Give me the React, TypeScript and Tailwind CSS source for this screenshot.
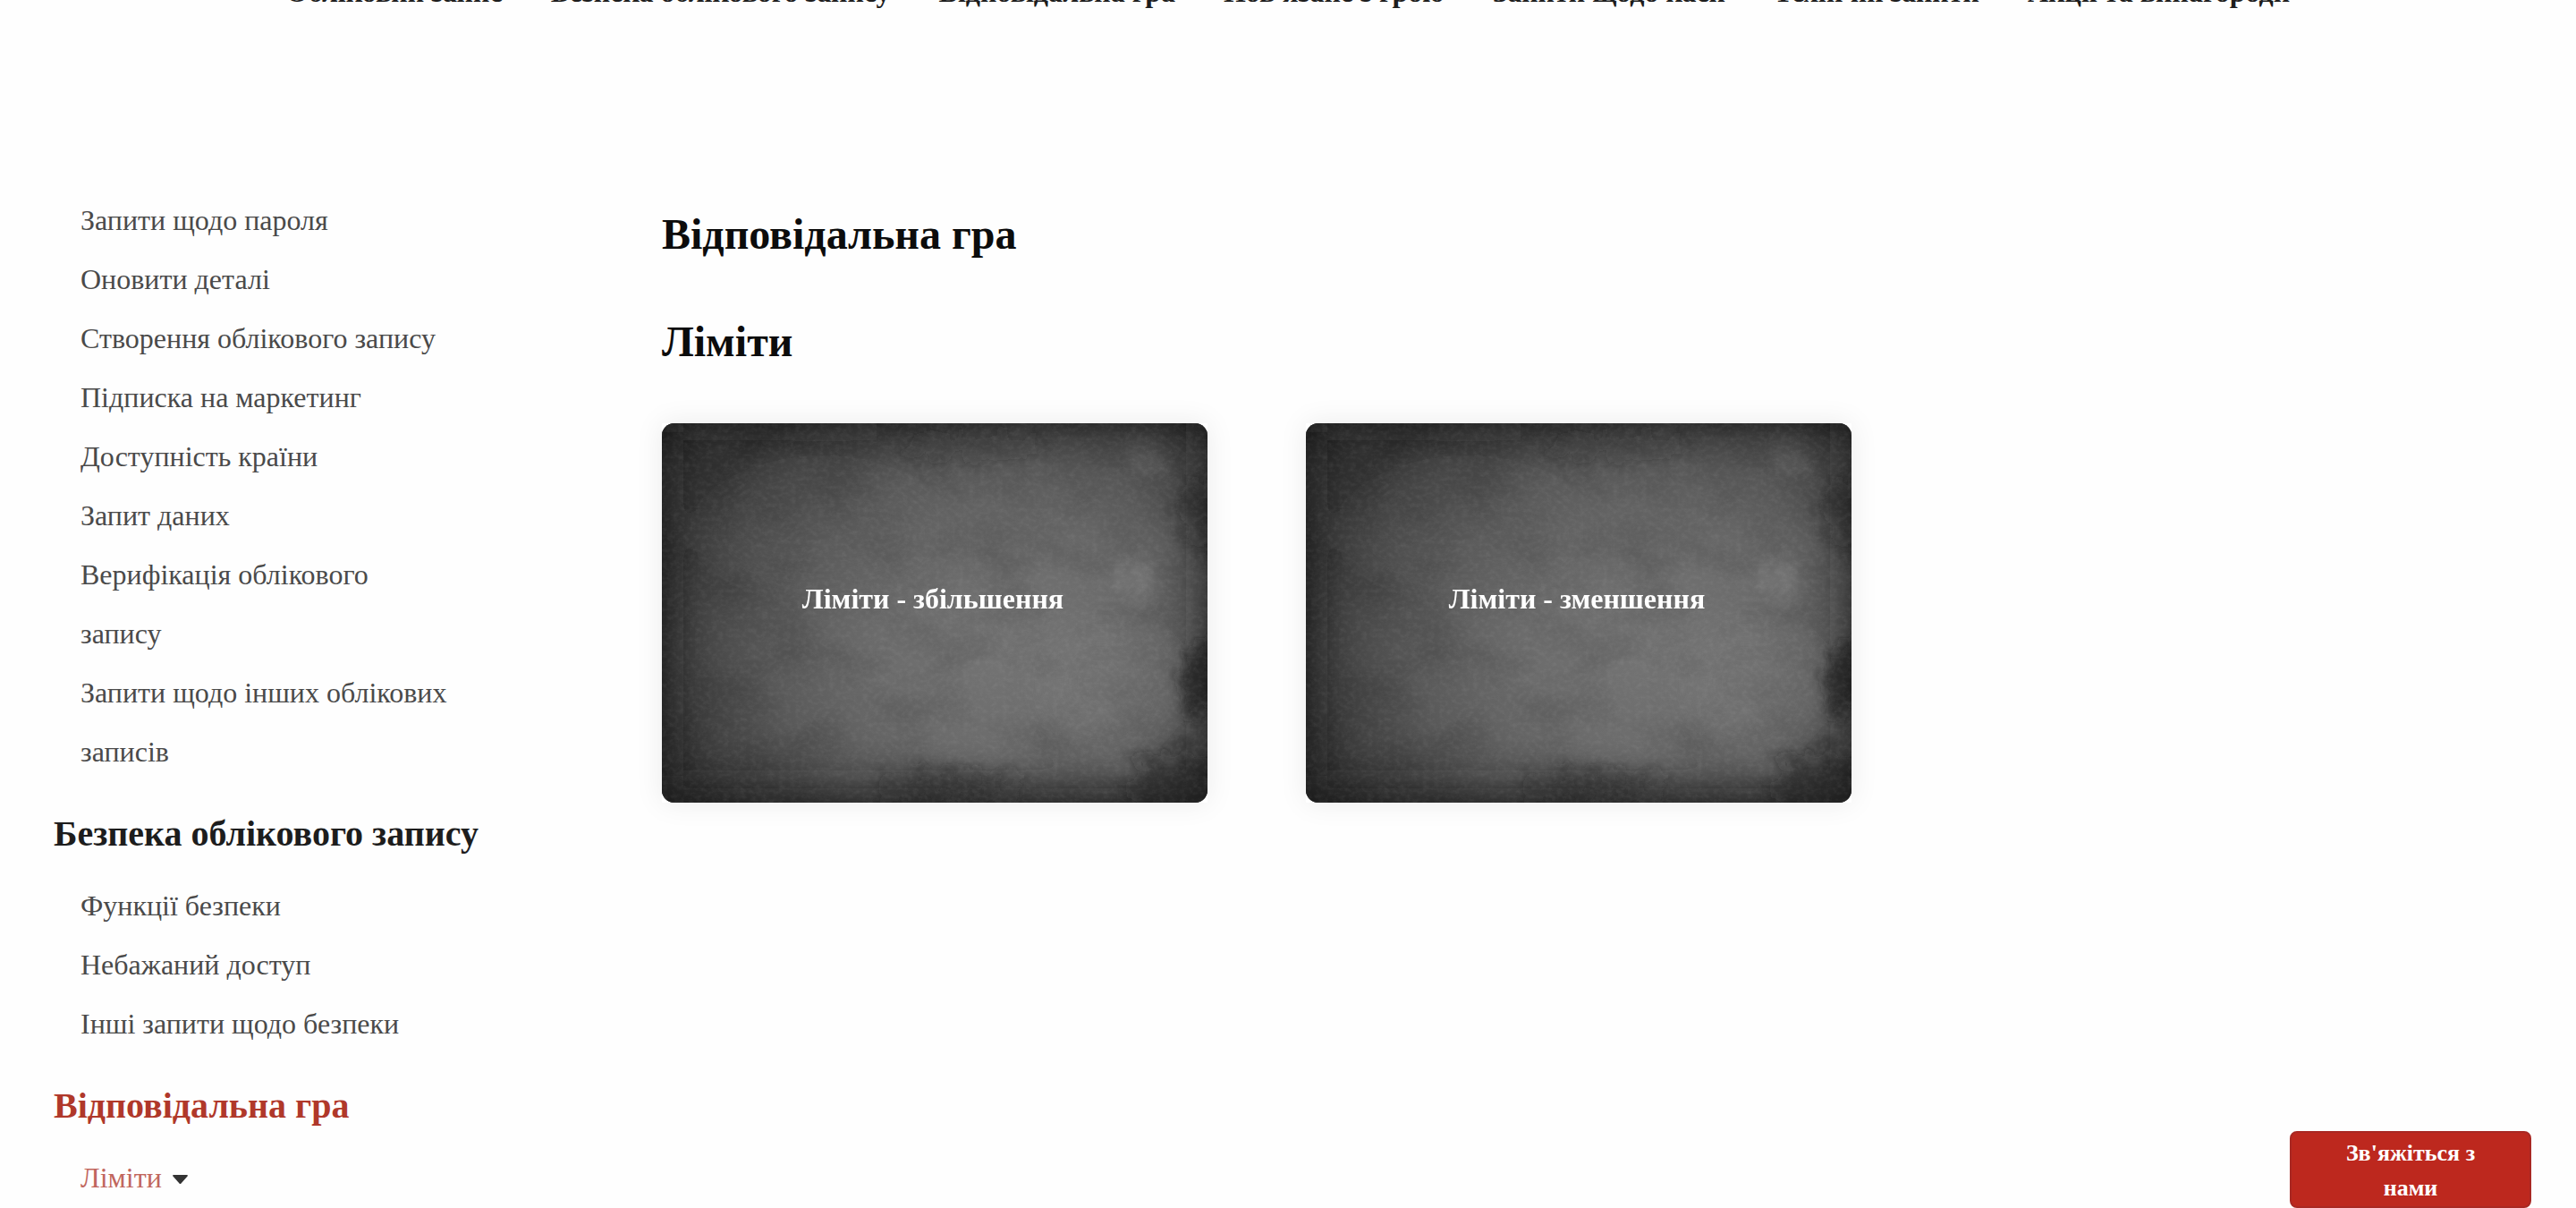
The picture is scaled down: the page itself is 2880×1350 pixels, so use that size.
import React from "react";

const topLinks = [
  "Обліковий запис",
  "Безпека облікового запису",
  "Відповідальна гра",
  "Пов'язане з грою",
  "Запити щодо каси",
  "Технічні запити",
  "Акції та винагороди",
];

const accountLinks = [
  "Запити щодо пароля",
  "Оновити деталі",
  "Створення облікового запису",
  "Підписка на маркетинг",
  "Доступність країни",
  "Запит даних",
  "Верифікація облікового запису",
  "Запити щодо інших облікових записів",
];

const securityLinks = ["Функції безпеки", "Небажаний доступ", "Інші запити щодо безпеки"];

const cards = ["Ліміти - збільшення", "Ліміти - зменшення"];

function Slate({ id }: { id: string }) {
  return (
    <svg
      className="absolute inset-0 h-full w-full"
      viewBox="0 0 610 424"
      preserveAspectRatio="none"
      aria-hidden="true"
    >
      <defs>
        <radialGradient id={`${id}-glow`} gradientUnits="userSpaceOnUse" cx="0" cy="0" r="1" gradientTransform="translate(385 250) scale(400 320)">
          <stop offset="0" stopColor="#747474" />
          <stop offset="0.35" stopColor="#6c6c6c" />
          <stop offset="0.65" stopColor="#5a5a5a" />
          <stop offset="1" stopColor="#363636" />
        </radialGradient>
        <filter id={`${id}-soft`} filterUnits="userSpaceOnUse" x="-120" y="-120" width="850" height="664">
          <feGaussianBlur stdDeviation="22" />
        </filter>
        <filter id={`${id}-edge`} filterUnits="userSpaceOnUse" x="-60" y="-60" width="730" height="544">
          <feGaussianBlur stdDeviation="10" result="blurred" />
          <feTurbulence type="fractalNoise" baseFrequency="0.05" numOctaves="5" seed="7" result="noise" />
          <feDisplacementMap in="blurred" in2="noise" scale="45" xChannelSelector="R" yChannelSelector="G" />
          <feGaussianBlur stdDeviation="2" />
        </filter>
        <filter id={`${id}-cloud`} x="0" y="0" width="100%" height="100%" colorInterpolationFilters="sRGB">
          <feTurbulence type="fractalNoise" baseFrequency="0.012 0.018" numOctaves="6" seed="12" />
          <feColorMatrix values="0 0 0 0 0  0 0 0 0 0  0 0 0 0 0  1 0 0 0 -0.38" />
        </filter>
        <filter id={`${id}-grain`} x="0" y="0" width="100%" height="100%" colorInterpolationFilters="sRGB">
          <feTurbulence type="fractalNoise" baseFrequency="0.16 0.2" numOctaves="3" seed="31" />
          <feColorMatrix values="0 0 0 0 1  0 0 0 0 1  0 0 0 0 1  0.5 0 0 0 -0.2" />
        </filter>
      </defs>
      <rect width="610" height="424" fill={`url(#${id}-glow)`} />
      <g filter={`url(#${id}-soft)`}>
        <ellipse cx="490" cy="290" rx="60" ry="60" fill="#858585" opacity="0.35" />
        <ellipse cx="180" cy="120" rx="120" ry="50" fill="#5e5e5e" opacity="0.3" />
        <rect x="-100" y="-100" width="110" height="624" fill="#1c1c1c" opacity="0.75" />
        <rect x="-100" y="-100" width="810" height="98" fill="#141414" opacity="0.75" />
        <rect x="-100" y="-100" width="340" height="110" fill="#1c1c1c" opacity="0.45" />
        <rect x="600" y="-100" width="110" height="624" fill="#1c1c1c" opacity="0.7" />
        <rect x="-100" y="408" width="810" height="110" fill="#1c1c1c" opacity="0.85" />
      </g>
      <g filter={`url(#${id}-edge)`}>
        <ellipse cx="612" cy="288" rx="30" ry="46" fill="#1d1d1d" opacity="0.7" />
        <ellipse cx="612" cy="100" rx="36" ry="40" fill="#222" opacity="0.35" />
        <ellipse cx="325" cy="408" rx="80" ry="16" fill="#222" opacity="0.45" />
        <ellipse cx="580" cy="410" rx="60" ry="44" fill="#1d1d1d" opacity="0.45" />
        <ellipse cx="345" cy="28" rx="85" ry="15" fill="#222" opacity="0.3" />
        <ellipse cx="540" cy="38" rx="20" ry="14" fill="#888" opacity="0.3" />
        <ellipse cx="532" cy="175" rx="14" ry="30" fill="#a0a0a0" opacity="0.3" />
      </g>
      <rect width="610" height="424" filter={`url(#${id}-cloud)`} opacity="0.24" />
      <rect width="610" height="424" filter={`url(#${id}-grain)`} opacity="0.25" />
    </svg>
  );
}

function SideHeading({ active, children }: { active?: boolean; children: React.ReactNode }) {
  return (
    <h3 className={`pt-[26px] pb-[14px] text-[40px] leading-[66px] font-bold whitespace-nowrap ${active ? "text-[#b0382a]" : "text-[#1d1d1d]"}`}>
      <a href="#section">{children}</a>
    </h3>
  );
}

function SideList({ items }: { items: string[] }) {
  return (
    <ul className="pr-8 pl-[30px] text-[32px] leading-[66px] text-[#4a4a4a]">
      {items.map((item) => (
        <li key={item}>
          <a href="#topic">{item}</a>
        </li>
      ))}
    </ul>
  );
}

export default function App() {
  return (
    <div className="min-h-screen bg-[#fefefe] font-['Liberation_Serif',serif]">
      <header className="flex h-[9px] items-end justify-center overflow-hidden">
        <nav className="flex gap-[54px] text-[32px] leading-[36px] font-bold whitespace-nowrap text-[#1d1d1d]">
          {topLinks.map((label) => (
            <a key={label} href="#category">
              {label}
            </a>
          ))}
        </nav>
      </header>

      <div className="flex pt-[204px] pr-[90px] pl-[60px]">
        <aside className="w-[480px] shrink-0">
          <SideList items={accountLinks} />
          <SideHeading>Безпека облікового запису</SideHeading>
          <SideList items={securityLinks} />
          <SideHeading active>Відповідальна гра</SideHeading>
          <div className="flex items-center gap-3 pl-[30px] text-[32px] leading-[66px] text-[#c1665d]">
            <a href="#limits">Ліміти</a>
            <button type="button" aria-label="Розгорнути" className="pt-1">
              <svg width="17" height="10" viewBox="0 0 17 10" aria-hidden="true">
                <path d="M1 0h15c.9 0 1.200.9.6 1.500L9.500 9.400c-.6.700-1.400.7-2 0L.4 1.500C-.2.9.1 0 1 0z" fill="#333" />
              </svg>
            </button>
          </div>
        </aside>

        <main className="ml-[200px] min-w-0 flex-1 pt-[21px] text-[#0c0c0c]">
          <h1 className="text-[48px] leading-[56px] font-bold">Відповідальна гра</h1>
          <h2 className="mt-16 text-[48px] leading-[56px] font-bold">Ліміти</h2>
          <div className="mt-[63px] grid grid-cols-3 gap-[110px]">
            {cards.map((title, i) => (
              <a
                key={title}
                href="#card"
                className="block bg-white shadow-[0_0_30px_rgba(0,0,0,0.08)]"
              >
                <div className="relative flex aspect-[610/424] items-center justify-center overflow-hidden rounded-[14px] bg-[#555]">
                  <Slate id={`slate${i}`} />
                  <span className="relative pr-1 pb-8 text-[32px] leading-[40px] font-bold text-white">{title}</span>
                </div>
              </a>
            ))}
          </div>
        </main>
      </div>

      <button
        type="button"
        className="fixed right-[50px] bottom-0 w-[270px] rounded-[8px] border-2 border-[#a92823] bg-[#bd281e] px-14 pt-[3px] pb-px text-[26px] leading-[39px] font-bold text-white"
      >
        Зв'яжіться з нами
      </button>
    </div>
  );
}
